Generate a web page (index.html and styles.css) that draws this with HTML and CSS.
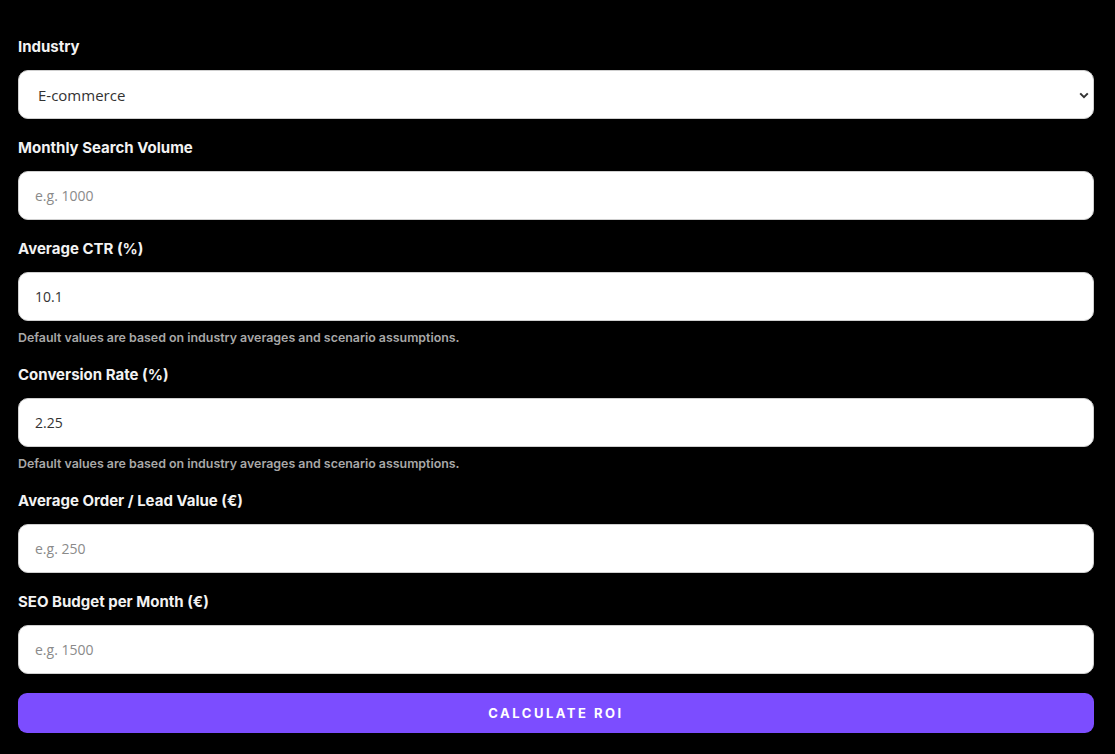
FILE: index.html
```html
<!DOCTYPE html>
<html lang="en">
<head>
<meta charset="utf-8">
<title>SEO ROI Calculator</title>
<link rel="stylesheet" href="styles.css">
</head>
<body>
<form class="calc">
  <div class="group">
    <label class="label" for="industry">Industry</label>
    <div class="select-wrap">
      <select id="industry" class="field select">
        <option>E-commerce</option>
        <option>SaaS</option>
        <option>Local Services</option>
      </select>
      <svg class="chev" width="10" height="7" viewBox="0 0 10 7"><path d="M1.2 1.4 L5 5.2 L8.8 1.4" fill="none" stroke="#333" stroke-width="2"/></svg>
    </div>
  </div>
  <div class="group">
    <label class="label" for="volume">Monthly Search Volume</label>
    <input id="volume" class="field" type="text" placeholder="e.g. 1000">
  </div>
  <div class="group">
    <label class="label" for="ctr">Average CTR (%)</label>
    <input id="ctr" class="field" type="text" value="10.1">
    <p class="hint">Default values are based on industry averages and scenario assumptions.</p>
  </div>
  <div class="group">
    <label class="label" for="conv">Conversion Rate (%)</label>
    <input id="conv" class="field" type="text" value="2.25">
    <p class="hint">Default values are based on industry averages and scenario assumptions.</p>
  </div>
  <div class="group">
    <label class="label" for="aov">Average Order / Lead Value (€)</label>
    <input id="aov" class="field" type="text" placeholder="e.g. 250">
  </div>
  <div class="group">
    <label class="label" for="budget">SEO Budget per Month (€)</label>
    <input id="budget" class="field" type="text" placeholder="e.g. 1500">
  </div>
  <button type="button" class="btn">Calculate ROI</button>
</form>
</body>
</html>
```
FILE: styles.css
```css
html, body {
  margin: 0;
  background: #000;
}
body {
  font-family: Inter, "Liberation Sans", sans-serif;
}
.calc {
  display: flex;
  flex-direction: column;
  gap: 19px;
  padding: 37px 21px 0 18px;
}
.group {
  display: flex;
  flex-direction: column;
}
.label {
  display: block;
  font-size: 15px;
  font-weight: 700;
  line-height: 20px;
  color: #f2f2f2;
  margin-bottom: 13px;
}
.field {
  box-sizing: border-box;
  width: 100%;
  height: 49px;
  margin: 0;
  padding: 0 16px;
  border: 1px solid #cfcfcf;
  border-radius: 10px;
  background: #fff;
  font-family: "Open Sans", "Liberation Sans", sans-serif;
  font-size: 14px;
  color: #333;
  outline: none;
}
.field::placeholder {
  color: #8a8a8a;
}
.select-wrap {
  position: relative;
}
.select {
  appearance: none;
  -webkit-appearance: none;
  padding-left: 19px;
  font-size: 15px;
}
.chev {
  position: absolute;
  right: 5px;
  top: 22px;
  pointer-events: none;
}
.hint {
  margin: 9px 0 0;
  font-size: 12.4px;
  font-weight: 600;
  line-height: 16px;
  color: #a8a8a8;
}
.btn {
  height: 40px;
  border: none;
  border-radius: 9px;
  background: #7c4dff;
  color: #fff;
  font-family: Inter, "Liberation Sans", sans-serif;
  font-size: 13px;
  font-weight: 700;
  letter-spacing: 2.5px;
  text-transform: uppercase;
  cursor: pointer;
}
```
